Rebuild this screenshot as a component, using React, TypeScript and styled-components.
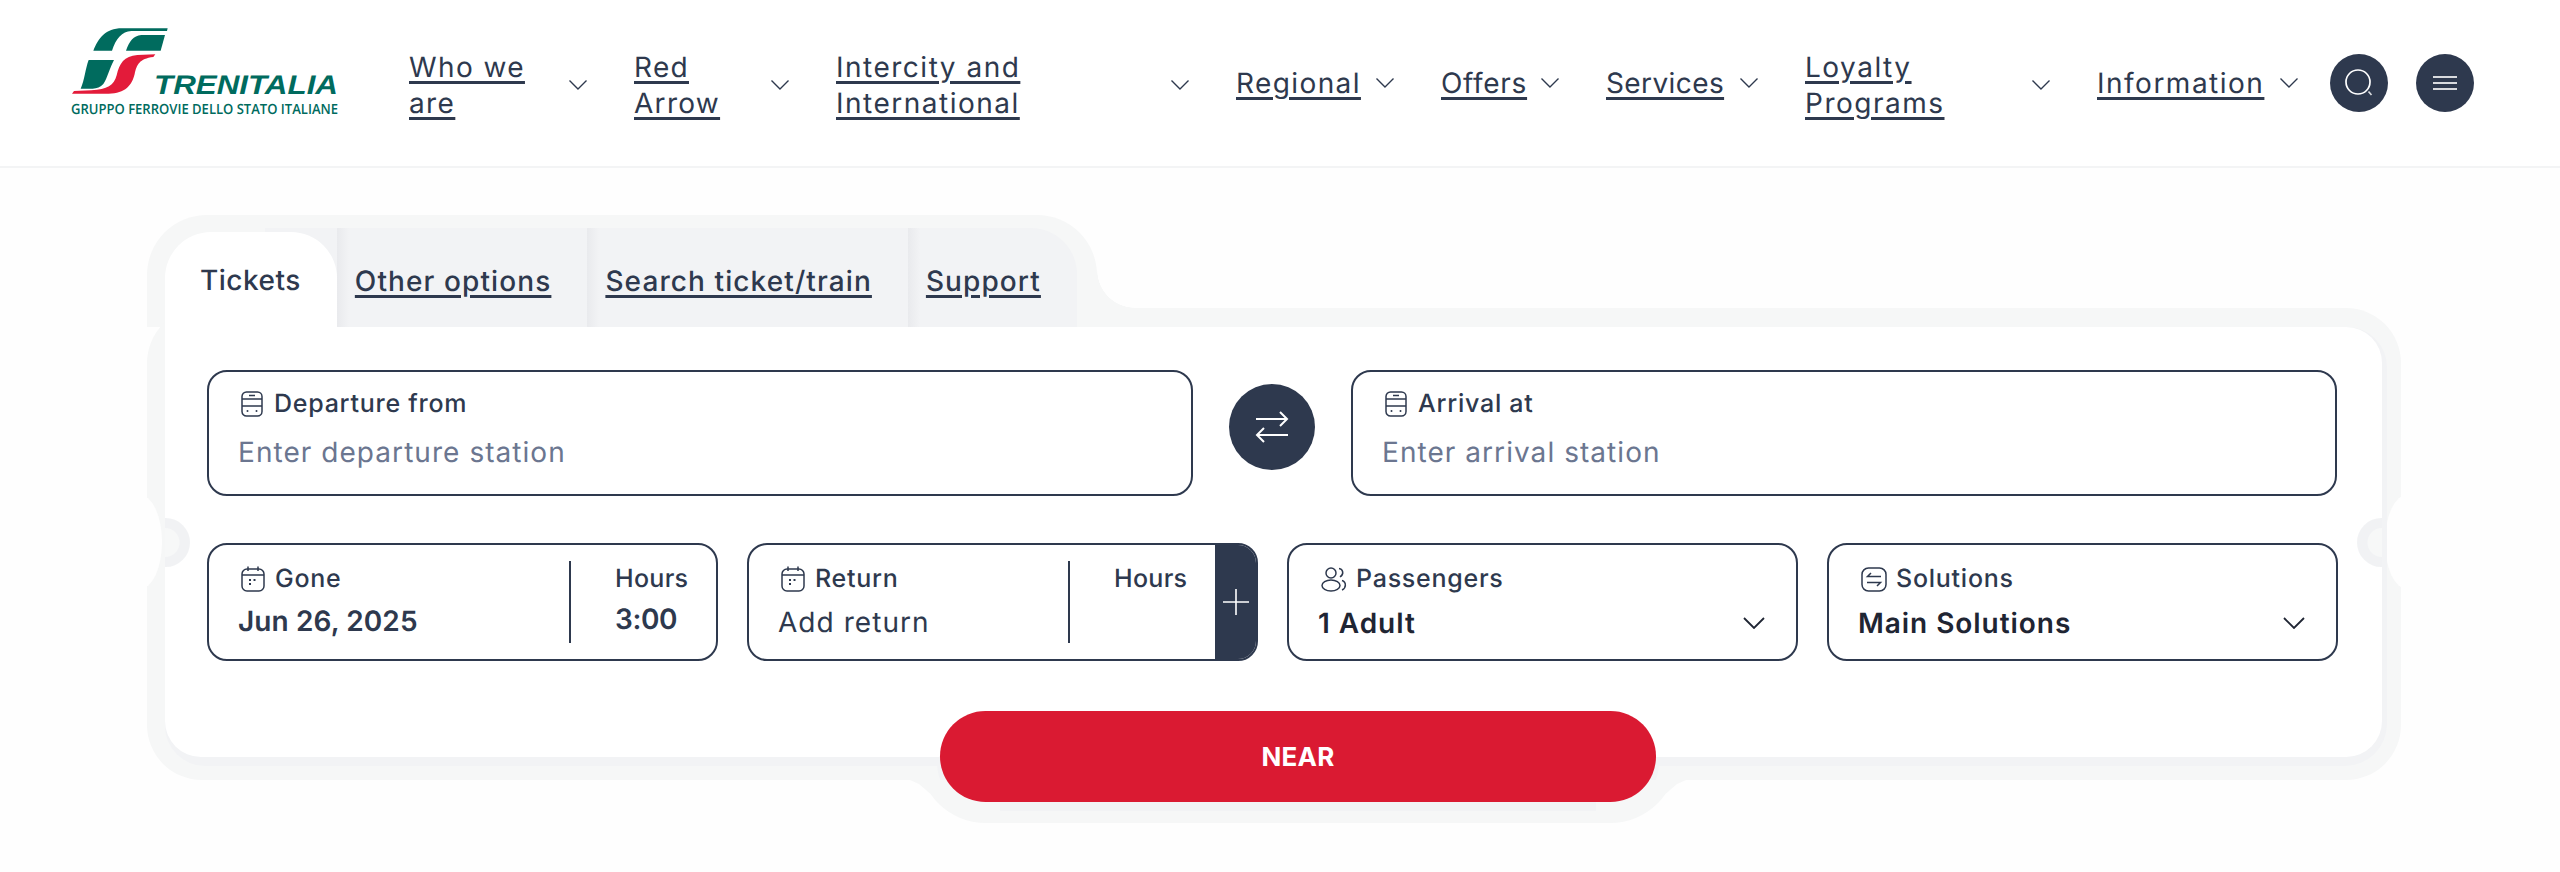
import { ReactElement, ReactNode } from 'react';
import styled, { createGlobalStyle } from 'styled-components';

const ink = '#2e394e';
const halo = '#f6f7f7';
const haloDark = '#f2f3f5';

const GlobalStyle = createGlobalStyle`
  html, body {
    margin: 0;
    background: #fefefe;
    font-family: Inter, "Liberation Sans", sans-serif;
    color: ${ink};
    text-rendering: geometricPrecision;
  }
  * { box-sizing: border-box; }
`;

const navItems = [
  { label: 'Who we are', width: 144, two: true, spacing: 1.4 },
  { label: 'Red Arrow', width: 121, two: true, spacing: 1.3 },
  { label: 'Intercity and International', width: 319, two: true, spacing: 1.5 },
  { label: 'Regional', width: 124, two: false, spacing: 1.4 },
  { label: 'Offers', width: 84, two: false, spacing: 0.7 },
  { label: 'Services', width: 118, two: false, spacing: 0.4 },
  { label: 'Loyalty Programs', width: 211, two: true, spacing: 1.5 },
  { label: 'Information', width: 167, two: false, spacing: 1.5 },
];

function TrenitaliaLogo(): ReactElement {
  return (
    <LogoSvg viewBox="0 0 267 86" width="267" height="86">
      <g transform="translate(-21,-18) scale(0.3333)">
        <path fill="#006b5e" d="M130 122C146 84 166 55 216 55L353 55L351 63L244 63C216 64 198 86 186 122Z" />
        <path fill="#006b5e" d="M228 122C238 94 250 77 274 75L345 75L332 122Z" />
        <path fill="#006b5e" d="M116 150L192 150C180 172 172 205 160 222C152 232 140 235 128 236L92 236C104 210 106 176 116 150Z" />
        <path fill="#e31b3a" d="M316 133L262 135C222 138 208 160 200 196C192 226 172 238 124 241L72 243L66 251L176 251C226 250 246 226 254 192C260 164 268 146 310 141Z" />
      </g>
      <text x="83" y="66" fontFamily="'Liberation Sans', sans-serif" fontWeight="700" fontStyle="italic" fontSize="27" fill="#006b5e" textLength="184" lengthAdjust="spacingAndGlyphs">TRENITALIA</text>
      <text x="0" y="86" fontFamily="'Open Sans', sans-serif" fontWeight="600" fontSize="14" fill="#006b5e" textLength="267" lengthAdjust="spacingAndGlyphs">GRUPPO FERROVIE DELLO STATO ITALIANE</text>
    </LogoSvg>
  );
}

function NavChevron(): ReactElement {
  return (
    <svg width="18" height="10" viewBox="0 0 18 10" fill="none" stroke={ink} strokeWidth="1.4">
      <path d="M0.5 0.5L9 9L17.5 0.5" />
    </svg>
  );
}

function SelectChevron(): ReactElement {
  return (
    <svg width="22" height="12" viewBox="0 0 22 12" fill="none" stroke="#1f2533" strokeWidth="1.8">
      <path d="M1 1L11 11L21 1" />
    </svg>
  );
}

function TrainIcon(): ReactElement {
  return (
    <svg width="22" height="26" viewBox="0 0 22 26" fill="none" stroke={ink} strokeWidth="1.5">
      <rect x="1" y="1" width="20" height="24" rx="4.5" />
      <path d="M1 8H21M1 15H21M8 4.5H14" />
      <circle cx="6.5" cy="20" r="1" fill={ink} stroke="none" />
      <circle cx="15.5" cy="20" r="1" fill={ink} stroke="none" />
    </svg>
  );
}

function CalendarIcon(): ReactElement {
  return (
    <svg width="24" height="26" viewBox="0 0 24 26" fill="none" stroke={ink} strokeWidth="1.5">
      <rect x="1" y="3" width="22" height="22" rx="5" />
      <path d="M1 9H23M7 0.5V5M17 0.5V5" />
      <path d="M8 14H10M12.5 14H14.5M8 18H10" strokeWidth="1.8" />
    </svg>
  );
}

function PassengersIcon(): ReactElement {
  return (
    <svg width="26" height="25" viewBox="0 0 26 25" fill="none" stroke={ink} strokeWidth="1.5">
      <circle cx="10" cy="6" r="5" />
      <ellipse cx="10" cy="18.5" rx="9" ry="5.5" />
      <path d="M18 1.5C22 2 23.5 7 19 10" />
      <path d="M21 13.5C25.5 15 25.5 21 21 23" />
    </svg>
  );
}

function SolutionsIcon(): ReactElement {
  return (
    <svg width="26" height="25" viewBox="0 0 26 25" fill="none" stroke={ink} strokeWidth="1.5">
      <rect x="1" y="1" width="24" height="23" rx="6.5" />
      <path d="M20 9.5H6.5L10 6M6 15.5H19.5L16 19" />
    </svg>
  );
}

function SwapIcon(): ReactElement {
  return (
    <svg width="34" height="32" viewBox="0 0 34 32" fill="none" stroke="#fff" strokeWidth="2">
      <path d="M1 8H32M25 1L32 8L25 15" />
      <path d="M33 24H2M9 17L2 24L9 31" />
    </svg>
  );
}

function SearchIcon(): ReactElement {
  return (
    <svg width="28" height="28" viewBox="0 0 28 28" fill="none" stroke="#fff" strokeWidth="1.7">
      <circle cx="13" cy="13" r="12" />
      <path d="M23.5 22.5L26.5 26" stroke="#d8dade" />
    </svg>
  );
}

function PlusIcon(): ReactElement {
  return (
    <svg width="26" height="26" viewBox="0 0 26 26" fill="none" stroke="#fff" strokeWidth="1.6">
      <path d="M13 0V26M0 13H26" />
    </svg>
  );
}

interface StationProps {
  label: string;
  placeholder: string;
}

function StationField({ label, placeholder }: StationProps): ReactElement {
  return (
    <Station>
      <FieldLabel>
        <TrainIcon />
        {label}
      </FieldLabel>
      <Placeholder>{placeholder}</Placeholder>
    </Station>
  );
}

interface DateProps {
  label: string;
  hours?: string;
  children: ReactNode;
  addon?: boolean;
}

function DateField({ label, hours, children, addon }: DateProps): ReactElement {
  return (
    <Box>
      <DateCol>
        <FieldLabel $gap={10}>
          <CalendarIcon />
          {label}
        </FieldLabel>
        {children}
      </DateCol>
      <Divider />
      <HoursCol>
        <HoursLabel>Hours</HoursLabel>
        {hours && <HoursValue>{hours}</HoursValue>}
      </HoursCol>
      {addon && (
        <AddBar>
          <PlusIcon />
        </AddBar>
      )}
    </Box>
  );
}

interface SelectProps {
  icon: ReactNode;
  label: string;
  value: string;
}

function SelectField({ icon, label, value }: SelectProps): ReactElement {
  return (
    <SelectBox>
      <FieldLabel $gap={9}>
        {icon}
        {label}
      </FieldLabel>
      <SelectRow>
        <SelectValue>{value}</SelectValue>
        <SelectChevron />
      </SelectRow>
    </SelectBox>
  );
}

function App(): ReactElement {
  return (
    <Page>
      <GlobalStyle />
      <Header>
        <TrenitaliaLogo />
        <Nav>
          {navItems.map((item) => (
            <NavItem key={item.label} $two={item.two}>
              <NavLink href="#" $width={item.width} $spacing={item.spacing}>{item.label}</NavLink>
              <NavChevron />
            </NavItem>
          ))}
        </Nav>
        <RoundButton $left={32}>
          <SearchIcon />
        </RoundButton>
        <RoundButton $left={28}>
          <MenuLines>
            <i />
            <i />
            <i />
          </MenuLines>
        </RoundButton>
      </Header>
      <Main>
        <SearchCard>
          <TabRow>
            <Tab $active>Tickets</Tab>
            <Tab href="#">Other options</Tab>
            <Tab href="#">Search ticket/train</Tab>
            <Tab href="#">Support</Tab>
          </TabRow>
          <Panel>
            <Pinch $side="left" />
            <Pinch $side="right" />
            <Notch $side="left" />
            <Notch $side="right" />
            <StationRow>
              <StationField label="Departure from" placeholder="Enter departure station" />
              <SwapButton>
                <SwapIcon />
              </SwapButton>
              <StationField label="Arrival at" placeholder="Enter arrival station" />
            </StationRow>
            <OptionsRow>
              <DateField label="Gone" hours="3:00">
                <DateValue>Jun 26, 2025</DateValue>
              </DateField>
              <DateField label="Return" addon>
                <AddReturn>Add return</AddReturn>
              </DateField>
              <SelectField icon={<PassengersIcon />} label="Passengers" value="1 Adult" />
              <SelectField icon={<SolutionsIcon />} label="Solutions" value="Main Solutions" />
            </OptionsRow>
            <ButtonRow>
              <ButtonHalo />
              <NearButton>NEAR</NearButton>
            </ButtonRow>
          </Panel>
        </SearchCard>
      </Main>
    </Page>
  );
}

export default App;

const Page = styled.div`
  min-height: 872px;
`;

const Header = styled.header`
  display: flex;
  align-items: center;
  height: 168px;
  padding-left: 71px;
  background: #fff;
  border-bottom: 2px solid #f3f4f5;
`;

const LogoSvg = styled.svg`
  flex: none;
  margin-bottom: 24px;
  overflow: visible;
`;

const Nav = styled.nav`
  display: flex;
  align-items: center;
  gap: 47px;
  margin-left: 71px;
`;

const NavItem = styled.div<{ $two: boolean }>`
  display: flex;
  align-items: center;
  gap: 16px;
  padding-top: ${(p) => (p.$two ? '4px' : '0')};
`;

const NavLink = styled.a<{ $width: number; $spacing: number }>`
  width: ${(p) => p.$width}px;
  font-size: 28px;
  line-height: 36px;
  letter-spacing: ${(p) => p.$spacing}px;
  color: ${ink};
  text-decoration: underline;
  text-decoration-thickness: 2.5px;
  text-underline-offset: 4px;
`;

const RoundButton = styled.button<{ $left: number }>`
  display: flex;
  align-items: center;
  justify-content: center;
  width: 58px;
  height: 58px;
  margin-left: ${(p) => p.$left}px;
  padding: 0;
  border: 0;
  border-radius: 50%;
  background: ${ink};
`;

const MenuLines = styled.span`
  display: flex;
  flex-direction: column;
  gap: 4px;
  width: 24px;

  i {
    display: block;
    height: 2px;
    background: #d8dade;
  }
`;

const Main = styled.main`
  padding: 60px 0 0 165px;
`;

const SearchCard = styled.div`
  position: relative;
  isolation: isolate;
  width: 2217px;
`;

const TabRow = styled.div`
  position: relative;
  display: flex;
  align-items: flex-end;
  width: 912px;
  height: 99px;
  border-top-right-radius: 46px;
  background: linear-gradient(${haloDark}, ${haloDark}) no-repeat 100px 0 / 100% 100%;

  &::before {
    content: '';
    position: absolute;
    z-index: -1;
    inset: -13px -20px 0 -18px;
    border-radius: 60px 60px 0 0;
    background: ${halo};
  }

  &::after {
    content: '';
    position: absolute;
    z-index: -1;
    left: calc(100% + 20px);
    bottom: 19px;
    width: 38px;
    height: 38px;
    background: radial-gradient(circle at 100% 0, transparent 37.5px, ${halo} 38px);
  }
`;

const Tab = styled.a<{ $active?: boolean }>`
  display: flex;
  align-items: center;
  flex: none;
  padding: ${(p) => (p.$active ? '0 36px 0 35px' : '6px 36px 0 18px')};
  height: ${(p) => (p.$active ? '95px' : '99px')};
  font-size: 28px;
  font-weight: 500;
  letter-spacing: ${(p) => (p.$active ? '0.5px' : '1.1px')};
  color: ${ink};
  text-decoration: ${(p) => (p.$active ? 'none' : 'underline')};
  text-decoration-thickness: 2.5px;
  text-underline-offset: 4px;
  border-radius: ${(p) => (p.$active ? '46px 46px 0 0' : '0')};
  background: ${(p) => (p.$active ? '#fff' : 'linear-gradient(90deg, #e9eaed, rgba(242, 243, 245, 0) 12px)')};
`;

const Panel = styled.div`
  position: relative;
  padding: 43px 44px 0 42px;
  height: 430px;
  background: #fff;
  border-radius: 0 36px 36px 36px;

  &::before {
    content: '';
    position: absolute;
    z-index: -1;
    inset: -19px -19px -23px -18px;
    border-radius: 55px;
    background: ${halo};
  }

  &::after {
    content: '';
    position: absolute;
    z-index: -1;
    inset: 0 -5px -9px 0;
    border-radius: 0 40px 42px 40px;
    background: ${haloDark};
  }
`;

const Pinch = styled.span<{ $side: 'left' | 'right' }>`
  position: absolute;
  z-index: -1;
  top: 168px;
  ${(p) => p.$side}: -47px;
  width: 44px;
  height: 94px;
  border-radius: 50%;
  background: #fefefe;
`;

const Notch = styled.span<{ $side: 'left' | 'right' }>`
  position: absolute;
  top: 191px;
  ${(p) => p.$side}: 0;
  width: 25px;
  height: 49px;
  border-radius: ${(p) => (p.$side === 'left' ? '0 25px 25px 0' : '25px 0 0 25px')};
  background: radial-gradient(circle at ${(p) => (p.$side === 'left' ? '0' : '100%')} 50%, #f7f8f8 0 14px, #f1f2f4 15px);
`;

const StationRow = styled.div`
  display: flex;
  align-items: flex-start;
  gap: 36px;
`;

const Box = styled.div`
  position: relative;
  display: flex;
  height: 118px;
  border: 2px solid ${ink};
  border-radius: 20px;
  background: #fff;
  overflow: hidden;
`;

const Station = styled(Box)`
  flex: none;
  flex-direction: column;
  width: 986px;
  height: 126px;
  padding: 15px 0 0 29px;
`;

const FieldLabel = styled.div<{ $gap?: number }>`
  display: flex;
  align-items: center;
  gap: ${(p) => p.$gap ?? 11}px;
  height: 34px;
  padding-left: 3px;
  font-size: 25px;
  font-weight: 500;
  letter-spacing: 0.75px;
  color: ${ink};
  white-space: nowrap;
`;

const Placeholder = styled.div`
  margin-top: 11px;
  font-size: 28px;
  line-height: 40px;
  letter-spacing: 1.05px;
  color: #6b7690;
`;

const SwapButton = styled.button`
  display: flex;
  align-items: center;
  justify-content: center;
  flex: none;
  width: 86px;
  height: 86px;
  margin-top: 14px;
  padding: 0;
  border: 0;
  border-radius: 50%;
  background: ${ink};
`;

const OptionsRow = styled.div`
  display: grid;
  grid-template-columns: repeat(4, 511px);
  gap: 29px;
  margin-top: 47px;
`;

const DateCol = styled.div`
  flex: 1;
  padding: 17px 0 0 29px;
`;

const DateValue = styled.div`
  margin-top: 5px;
  font-size: 28px;
  font-weight: 600;
  line-height: 40px;
  letter-spacing: 0.1px;
`;

const AddReturn = styled.div`
  margin-top: 6px;
  font-size: 28px;
  line-height: 40px;
  letter-spacing: 1.05px;
`;

const Divider = styled.span`
  flex: none;
  width: 2px;
  height: 82px;
  margin-top: 16px;
  background: ${ink};
`;

const HoursCol = styled.div`
  flex: none;
  width: 145px;
  padding: 17px 0 0 44px;
`;

const HoursLabel = styled.div`
  height: 34px;
  font-size: 25px;
  line-height: 34px;
  font-weight: 500;
  letter-spacing: 0.3px;
`;

const HoursValue = styled.div`
  margin-top: 3px;
  font-size: 28px;
  font-weight: 600;
  line-height: 40px;
  letter-spacing: -0.4px;
`;

const AddBar = styled.span`
  display: flex;
  align-items: center;
  justify-content: center;
  flex: none;
  width: 41px;
  background: ${ink};
`;

const SelectBox = styled(Box)`
  flex-direction: column;
  padding: 17px 31px 0 29px;
`;

const SelectRow = styled.div`
  display: flex;
  align-items: center;
  justify-content: space-between;
  margin-top: 7px;
`;

const SelectValue = styled.div`
  font-size: 28px;
  font-weight: 600;
  line-height: 40px;
  letter-spacing: 0.95px;
  color: #1f2533;
`;

const ButtonRow = styled.div`
  position: relative;
  width: 716px;
  margin: 50px 0 0 733px;
`;

const ButtonHalo = styled.span`
  position: absolute;
  z-index: -1;
  inset: 0;
  border-radius: 46px;
  box-shadow: 0 6px 0 3px ${haloDark}, 0 0 0 21px ${halo};

  &::before,
  &::after {
    content: '';
    position: absolute;
    top: 69px;
    width: 95px;
    height: 43px;
    background: ${halo};
  }

  &::before {
    left: -35px;
    clip-path: polygon(5px 0, 14px 4px, 29px 17px, 53px 33px, 70px 40px, 86px 43px, 95px 43px, 95px 0);
  }

  &::after {
    right: -35px;
    clip-path: polygon(90px 0, 81px 4px, 66px 17px, 42px 33px, 25px 40px, 9px 43px, 0 43px, 0 0);
  }
`;

const NearButton = styled.button`
  display: block;
  width: 100%;
  height: 91px;
  padding: 0;
  border: 0;
  border-radius: 46px;
  background: #da1a32;
  color: #fff;
  font-family: inherit;
  font-size: 26px;
  font-weight: 700;
  letter-spacing: 0.2px;
`;
